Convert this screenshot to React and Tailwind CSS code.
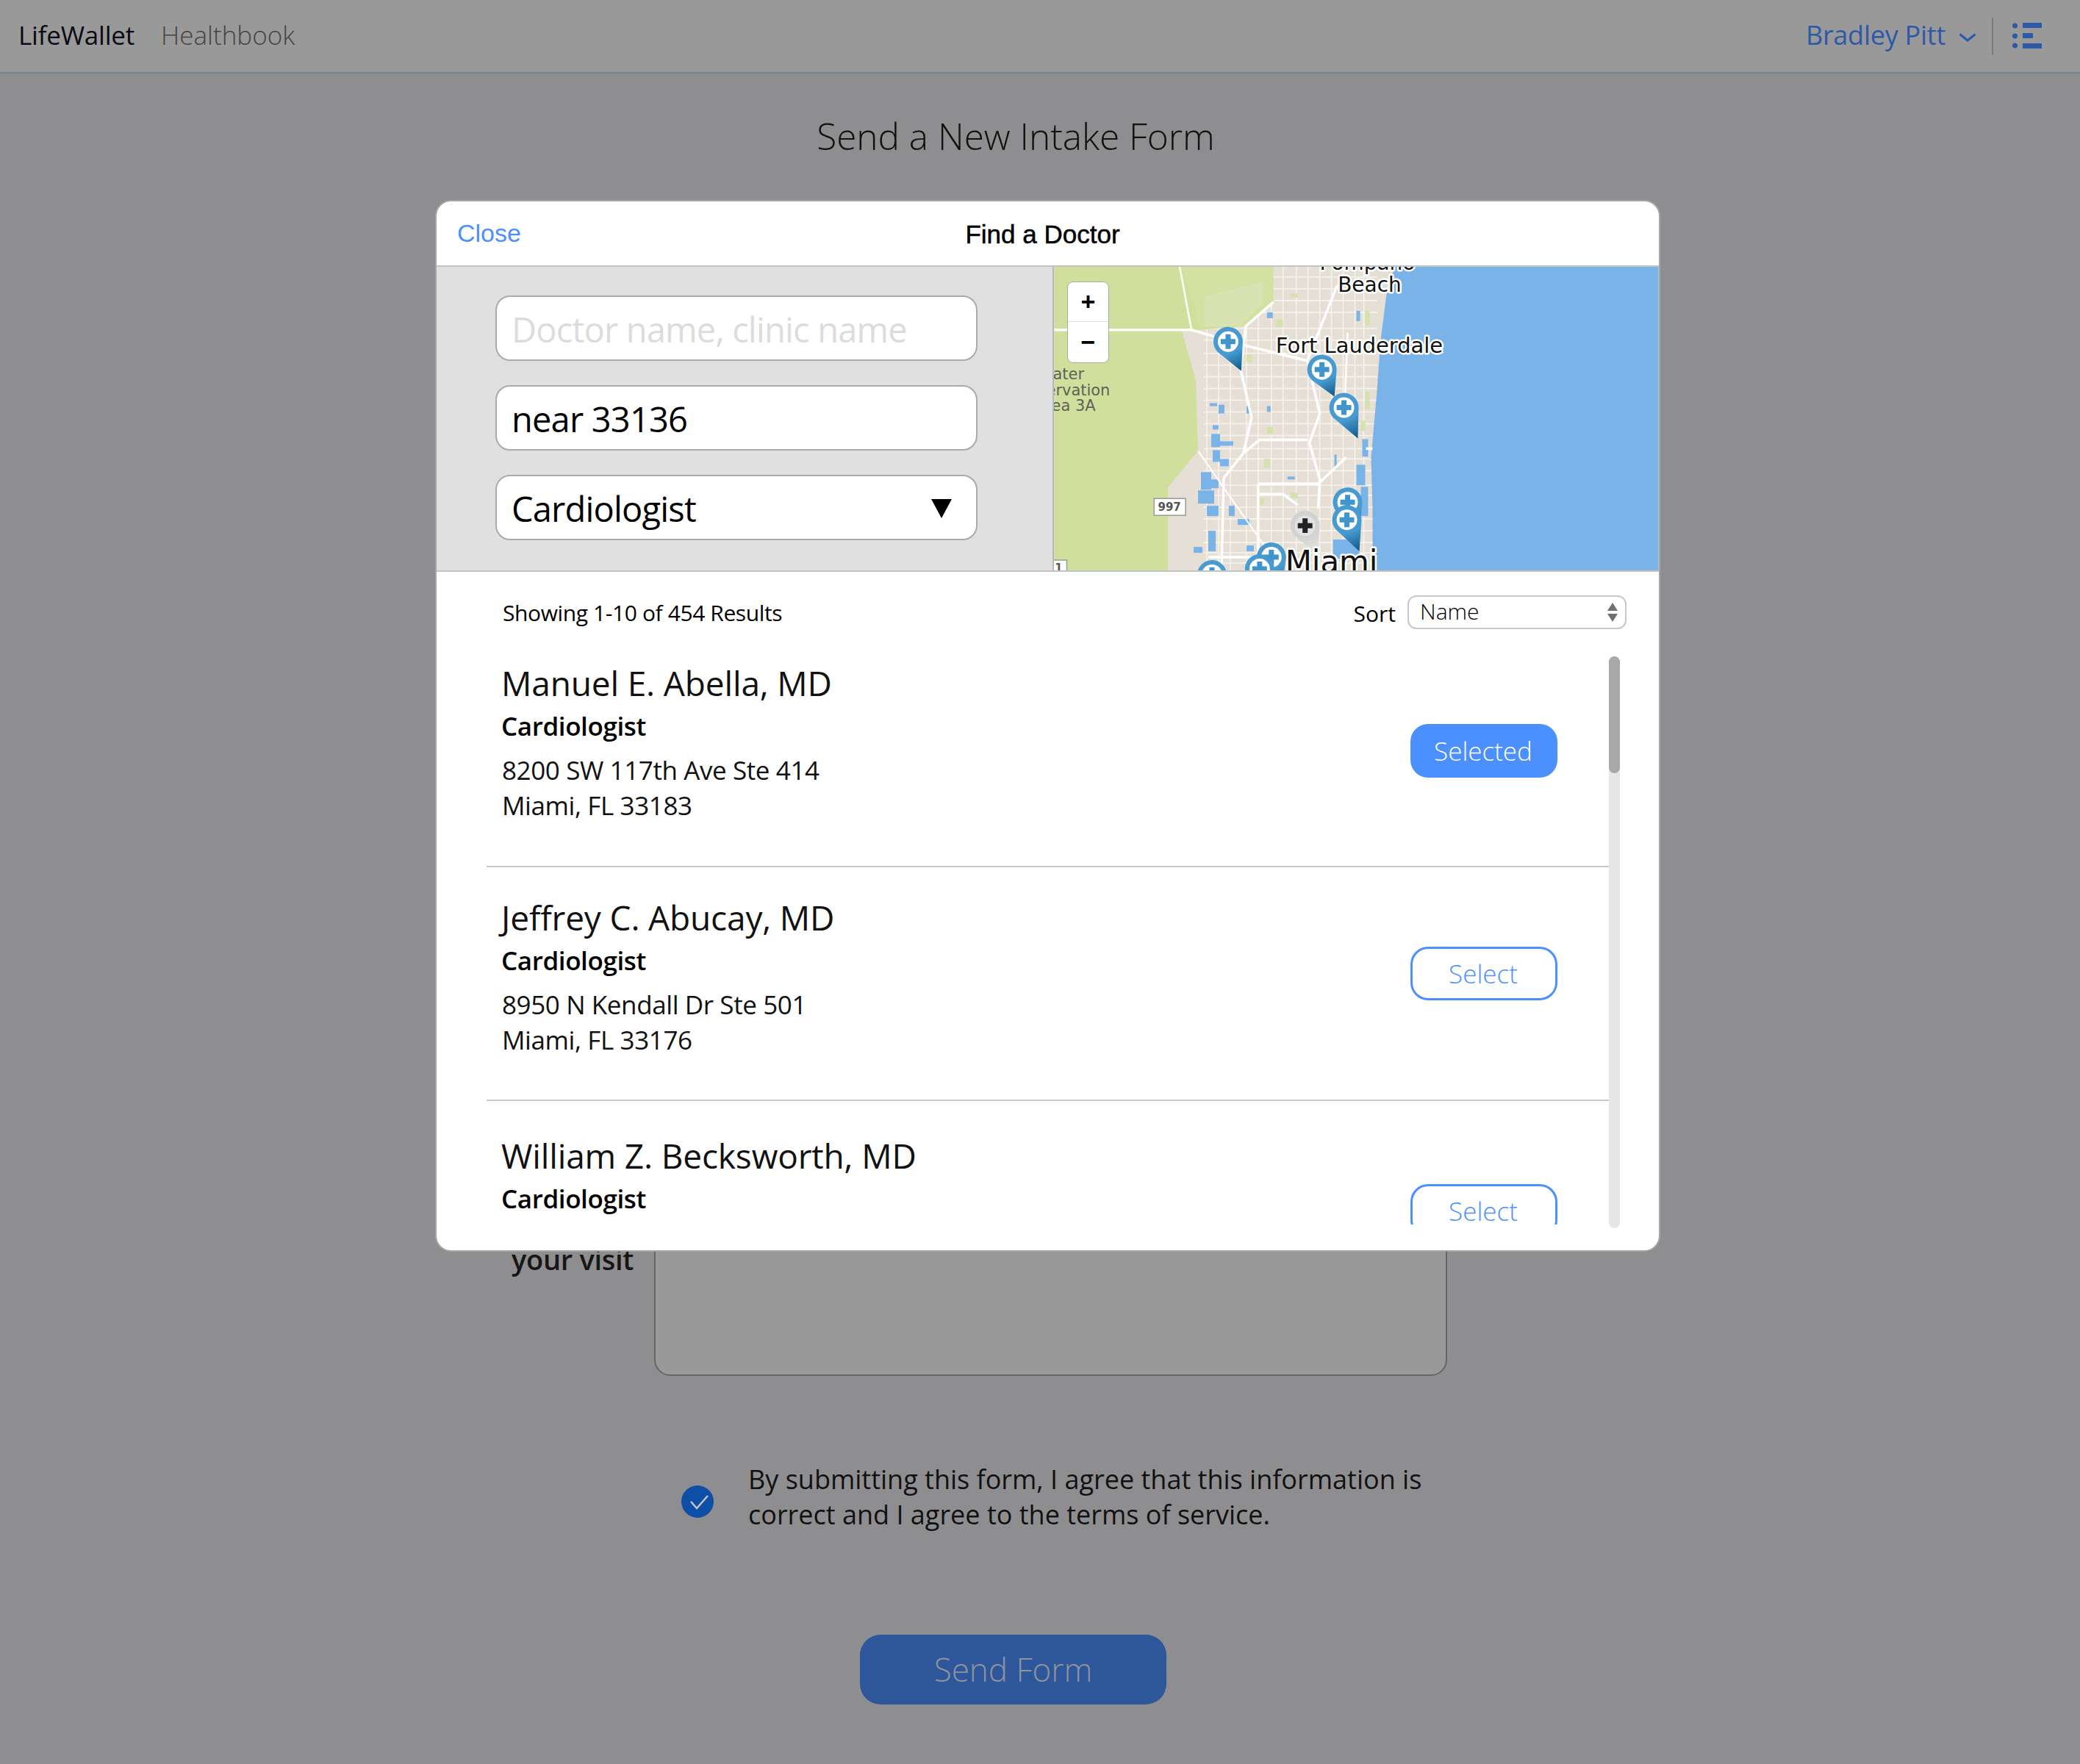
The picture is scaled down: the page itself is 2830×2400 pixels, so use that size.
const doctors = [
  { name: "Manuel E. Abella, MD", line1: "8200 SW 117th Ave Ste 414", line2: "Miami, FL 33183", selected: true, pad: "pt-[4px]", btn: "mt-[92px]", h: "h-[285px]" },
  { name: "Jeffrey C. Abucay, MD", line1: "8950 N Kendall Dr Ste 501", line2: "Miami, FL 33176", pad: "pt-[36px]", btn: "mt-[108px]", h: "h-[316px]" },
  { name: "William Z. Becksworth, MD", line1: "", line2: "", pad: "pt-[42px]", btn: "mt-[113px]", h: "h-[320px]" },
];

const DoctorRow = ({ doctor, last }) => (
  <div className={`${doctor.h} w-[1527px] ml-[68px] flex justify-between shrink-0 ${last ? "" : "border-b-2 border-[#c8c8c8] box-content"}`}>
    <div className={`${doctor.pad} pl-[21px]`}>
      <div className="text-[46px] leading-[64px] text-[#111] -ml-[1px] tracking-[-0.15px]">{doctor.name}</div>
      <div className="text-[35px] leading-[48px] font-semibold text-black mt-[3px] tracking-[-0.4px] -ml-[1px]">Cardiologist</div>
      {doctor.line1 && (
        <div className="text-[35px] leading-[48px] text-[#111] mt-[12px] tracking-[-0.4px]">
          <div>{doctor.line1}</div>
          <div>{doctor.line2}</div>
        </div>
      )}
    </div>
    <div className={doctor.btn}>
      <div
        className={`w-[200px] h-[73px] mr-[70px] rounded-[24px] flex items-center justify-center pt-[2px] pr-[2px] text-[35px] font-light border-[3px] border-[#4c90fe] ${
          doctor.selected ? "bg-[#4c90fe] text-white" : "bg-white text-[#4c90fe]"
        }`}
      >
        {doctor.selected ? "Selected" : "Select"}
      </div>
    </div>
  </div>
);

const Pin = ({ x, y, tx, ty, gray }) => {
  const r = 20;
  const dx = tx - x;
  const dy = ty - y;
  const len = Math.hypot(dx, dy);
  const base = Math.atan2(dy, dx);
  const spread = Math.acos(r / len);
  const ax = x + r * Math.cos(base + spread);
  const ay = y + r * Math.sin(base + spread);
  const bx = x + r * Math.cos(base - spread);
  const by = y + r * Math.sin(base - spread);
  const id = `pin-${x}-${y}`;
  return (
    <g>
      <defs>
        <linearGradient id={id} gradientUnits="userSpaceOnUse" x1={x} y1={y} x2={tx} y2={ty}>
          <stop offset="0.35" stopColor={gray ? "#d2d2d2" : "#479bd0"} />
          <stop offset="1" stopColor={gray ? "#e4e4e4" : "#0e5685"} />
        </linearGradient>
      </defs>
      <path d={`M${ax} ${ay} L${tx} ${ty} L${bx} ${by} A${r} ${r} 0 1 0 ${ax} ${ay} Z`} fill={`url(#${id})`} />
      <circle cx={x} cy={y} r="14" fill={gray ? "#e2e2e2" : "#ffffff"} />
      <path d={`M${x - 3.5} ${y - 10}h7v6.5h6.5v7h-6.5v6.5h-7v-6.5h-6.5v-7h6.5z`} fill={gray ? "#222222" : "#3f95cc"} />
    </g>
  );
};

const MapView = () => {
  const hLines = [14, 30, 46, 62, 84, 100, 118, 134, 150, 166, 182, 198, 214, 230, 248, 262, 278, 298, 312, 328, 344, 360, 376, 390, 404];
  const vLines = [208, 224, 240, 262, 278, 296, 312, 330, 346, 362, 378, 394, 410, 422];
  const blue = [
    [212, 186, 10, 4], [224, 188, 8, 12], [216, 216, 8, 6], [214, 228, 12, 18], [226, 238, 18, 6],
    [216, 250, 10, 16], [226, 262, 12, 10], [200, 280, 14, 24], [214, 290, 10, 12], [196, 305, 22, 18],
    [208, 326, 16, 14], [238, 326, 8, 14], [250, 344, 16, 8], [210, 360, 10, 28], [190, 382, 12, 8],
    [290, 62, 8, 8], [412, 270, 12, 28], [420, 235, 8, 24], [382, 256, 3, 20], [380, 372, 36, 26],
    [412, 60, 5, 14], [262, 380, 10, 8], [262, 190, 6, 10], [290, 190, 5, 8], [418, 300, 10, 40], [318, 286, 10, 4],
  ];
  const green = [
    [302, 72, 10, 10], [262, 120, 8, 10], [290, 218, 8, 10], [322, 36, 10, 6], [286, 262, 8, 12],
    [424, 60, 6, 20], [424, 170, 6, 24], [418, 210, 6, 14], [300, 380, 8, 10], [322, 308, 10, 8], [280, 316, 6, 8],
  ];
  return (
    <svg viewBox="0 0 824 414" className="w-full h-full block">
      <defs>
        <clipPath id="land">
          <path d="M299 0L299 48L261 81L174 88L193 155L196 251L155 301L155 414L434 414L434 330L432 260L440 170L445 100L453 38L464 0Z" />
        </clipPath>
      </defs>
      <rect width="824" height="414" fill="#d0e09c" />
      <path d="M175 0L299 0L299 48L262 82L198 82L190 50Z" fill="#d3e1a2" />
      <path d="M205 40L285 20L285 50L255 80L205 82Z" fill="#d9e2b2" />
      <rect x="430" width="394" height="414" fill="#7ab3e8" />
      <path d="M299 0L299 48L261 81L174 88L193 155L196 251L155 301L155 414L434 414L434 330L432 260L440 170L445 100L453 38L464 0Z" fill="#e6dfd5" />
      <g clipPath="url(#land)" stroke="#f6f3ee" fill="none">
        {hLines.map((y) => (
          <path key={y} d={`M204 ${y}H440`} strokeWidth="1.6" />
        ))}
        {vLines.map((x) => (
          <path key={x} d={`M${x} 0V414`} strokeWidth="1.6" />
        ))}
      </g>
      {green.map(([x, y, w, h]) => (
        <rect key={`g-${x}-${y}`} x={x} y={y} width={w} height={h} fill="#d6e2ae" />
      ))}
      {blue.map(([x, y, w, h]) => (
        <rect key={`${x}-${y}`} x={x} y={y} width={w} height={h} fill="#7ab3e8" />
      ))}
      <g stroke="#ffffff" strokeWidth="3.5" fill="none" strokeLinejoin="round">
        <path d="M0 86H187L263 108L345 128" />
        <path d="M171 0L187 86" strokeWidth="2.5" />
        <path d="M299 48L261 81L254 140L269 205L258 254L231 288L228 414" />
        <path d="M386 25L345 128L362 200L348 240L362 290L360 330" />
        <path d="M258 254L280 236H345" />
        <path d="M196 251L300 400" strokeWidth="2" />
        <path d="M278 296H360L398 260" />
        <path d="M278 296V414" />
        <path d="M280 310H312L332 325" />
        <path d="M210 396H300" />
        <path d="M400 90L396 190" strokeWidth="2.5" />
        <path d="M425 248H434" />
      </g>
      <rect x="136" y="316" width="43" height="23" fill="#ffffff" stroke="#9a9a9a" strokeWidth="1.5" />
      <text x="157" y="333" textAnchor="middle" fontFamily="'DejaVu Sans', sans-serif" fontWeight="700" fontSize="15" fill="#555">997</text>
      <rect x="-4" y="400" width="21" height="20" fill="#ffffff" stroke="#9a9a9a" strokeWidth="1.5" />
      <text x="6" y="416" textAnchor="middle" fontFamily="'DejaVu Sans', sans-serif" fontSize="15" fontWeight="700" fill="#555">1</text>
      <g fontFamily="'DejaVu Sans', sans-serif" fontSize="21" fill="#5d6356">
        <text x="-2" y="153">ater</text>
        <text x="-11" y="175">ervation</text>
        <text x="-4" y="196">ea 3A</text>
      </g>
      <g fontFamily="'DejaVu Sans', sans-serif" fill="#111" stroke="#ffffff" strokeWidth="5" paintOrder="stroke" strokeLinejoin="round">
        <text x="427" y="4" textAnchor="middle" fontSize="28">Pompano</text>
        <text x="430" y="34" textAnchor="middle" fontSize="28">Beach</text>
        <text x="416" y="117" textAnchor="middle" fontSize="29">Fort Lauderdale</text>
      </g>
      <Pin x={400} y={321} tx={416} ty={362} />
      <Pin x={237} y={102} tx={255} ty={142} />
      <Pin x={365} y={140} tx={382} ty={177} />
      <Pin x={395} y={192} tx={414} ty={234} />
      <Pin x={215} y={420} tx={220} ty={462} />
      <Pin x={296} y={396} tx={310} ty={440} />
      <Pin x={280} y={412} tx={290} ty={455} />
      <Pin x={342} y={353} tx={358} ty={390} gray />
      <Pin x={399} y={345} tx={416} ty={388} />
      <text x="378" y="417" textAnchor="middle" fontFamily="'DejaVu Sans', sans-serif" fontSize="42" fill="#111" stroke="#ffffff" strokeWidth="5" paintOrder="stroke" strokeLinejoin="round">Miami</text>
    </svg>
  );
};

const FieldBox = ({ children, className = "" }) => (
  <div className={`w-[656px] h-[89px] shrink-0 rounded-[20px] border-2 border-[#aaaaaa] bg-white flex items-center pl-[20px] pr-[33px] pt-[3px] text-[47px] tracking-[-0.8px] ${className}`}>
    {children}
  </div>
);

const DoctorModal = () => (
  <div className="absolute left-[592px] top-[272px] w-[1667px] h-[1431px] rounded-[22px] bg-white border-2 border-[#a6a6a6] overflow-hidden flex flex-col font-['Open_Sans',sans-serif]">
    <div className="h-[89px] shrink-0 border-b-2 border-[#c4c4c4] relative flex items-center justify-center font-['Liberation_Sans',sans-serif]">
      <span className="absolute left-[28px] top-[21px] text-[34px] leading-[44px] text-[#4c90fe]">Close</span>
      <span className="text-[35px] leading-[44px] text-black ml-[-14px] mt-[2px] [-webkit-text-stroke:0.5px_black]">Find a Doctor</span>
    </div>
    <div className="h-[415px] shrink-0 flex border-b-2 border-[#c4c4c4] bg-[#e0e0e0]">
      <div className="w-[838px] shrink-0 flex flex-col pl-[80px] pt-[39px] gap-[33px] text-black">
        <FieldBox>
          <span className="text-[#dcdcdc]">Doctor name, clinic name</span>
        </FieldBox>
        <FieldBox>near 33136</FieldBox>
        <FieldBox className="justify-between">
          Cardiologist
          <svg width="28" height="26" viewBox="0 0 28 26">
            <path d="M0 0H28L14 26Z" fill="#000" />
          </svg>
        </FieldBox>
      </div>
      <div className="flex-1 relative border-l-2 border-[#b8b8b8] overflow-hidden">
        <MapView />
        <div className="absolute left-[18px] top-[20px] w-[57px] h-[111px] bg-white rounded-[8px] border border-[#aaaaaa] flex flex-col items-center text-black font-['Liberation_Sans',sans-serif]">
          <div className="h-[54px] w-full flex items-center justify-center border-b border-[#dddddd] text-[34px] font-bold">+</div>
          <div className="flex-1 w-full flex items-center justify-center text-[34px] font-bold">−</div>
        </div>
      </div>
    </div>
    <div className="flex-1 flex flex-col min-h-0 relative">
      <div className="h-[115px] shrink-0 flex items-center justify-between pl-[90px] pr-[44px] pb-[5px] text-black">
        <span className="text-[30px] leading-[40px] font-medium tracking-[-0.4px] mt-[1px]">Showing 1-10 of 454 Results</span>
        <div className="flex items-center gap-[16px]">
          <span className="text-[30px] leading-[40px] mt-[4px]">Sort</span>
          <div className="w-[298px] h-[46px] rounded-[12px] border-2 border-[#c8c8c8] flex items-center justify-between pl-[15px] pr-[10px] text-[30px]">
            <span className="leading-[40px] mt-[-3px] font-light">Name</span>
            <svg width="14" height="26" viewBox="0 0 14 26">
              <path d="M7 0L14 11H0Z M0 15H14L7 26Z" fill="#707070" />
            </svg>
          </div>
        </div>
      </div>
      <div className="h-[773px] shrink-0 overflow-hidden flex flex-col">
        {doctors.map((d, i) => (
          <DoctorRow key={d.name} doctor={d} last={i === doctors.length - 1} />
        ))}
      </div>
      <div className="absolute left-[1595px] top-[115px] w-[15px] h-[778px] rounded-[8px] bg-[#e6e6e6]">
        <div className="h-[159px] rounded-[8px] bg-[#a8a8a8]" />
      </div>
    </div>
  </div>
);

const App = () => (
  <div className="relative w-[2830px] h-[2400px] bg-[#8e8e90] overflow-hidden flex flex-col font-['Open_Sans',sans-serif]">
    <header className="h-[100px] shrink-0 bg-[#999999] border-b-2 border-[#6f8598] flex items-center justify-between pl-[25px] pr-[52px]">
      <div className="flex items-center gap-[36px] text-[35px] mt-[-2px]">
        <span className="text-[#0a0a14] tracking-[-0.2px]">LifeWallet</span>
        <span className="text-[#444444] font-light">Healthbook</span>
      </div>
      <div className="flex items-center text-[#2c5aa8]">
        <span className="text-[36px] tracking-[-0.25px] mt-[-3px]">Bradley Pitt</span>
        <svg className="ml-[18px] mt-[4px]" width="24" height="12" viewBox="0 0 24 12" fill="none">
          <path d="M1.5 1.5L12 10L22.5 1.5" stroke="#2c5aa8" strokeWidth="3" />
        </svg>
        <div className="w-[2px] h-[51px] bg-[#7a7a7a] ml-[21px] mr-[26px]" />
        <svg width="40" height="36" viewBox="0 0 40 36" fill="#2c5aa8">
          <circle cx="3.5" cy="4" r="3.5" />
          <circle cx="3.5" cy="18" r="3.5" />
          <circle cx="3.5" cy="31" r="3.5" />
          <rect x="14" y="0" width="26" height="7" />
          <rect x="14" y="14" width="14" height="7" />
          <rect x="14" y="28" width="26" height="7" />
        </svg>
      </div>
    </header>
    <main className="flex-1 flex flex-col">
      <h1 className="text-[49.5px] font-light text-[#111] text-center mt-[51px] leading-[68px] mr-[66px]">Send a New Intake Form</h1>
      <div className="flex ml-[696px] mt-[1466px] h-[172px]">
        <span className="w-[194px] text-[38px] leading-[48px] mt-[-72px] pt-[76px] font-semibold text-[#161616] tracking-[-0.3px]">your visit</span>
        <div className="w-[1079px] -mt-[100px] h-[287px] rounded-[22px] border-2 border-[#666666] bg-[#999999]" />
      </div>
      <div className="flex items-center ml-[927px] mt-[132px]">
        <div className="w-[44px] h-[44px] mt-[12px] rounded-full bg-[#0d4ea6] shrink-0">
          <svg width="44" height="44" viewBox="0 0 44 44" fill="none">
            <path d="M13 22L21 31L36 14" stroke="#c4c4c4" strokeWidth="2.5" />
          </svg>
        </div>
        <p className="ml-[47px] text-[36px] leading-[48px] text-[#111]">
          By submitting this form, I agree that this information is
          <br />
          correct and I agree to the terms of service.
        </p>
      </div>
      <div className="ml-[1170px] mt-[139px] w-[417px] h-[95px] rounded-[28px] bg-[#2d569b] flex items-center justify-center pb-[2px] text-[44px] font-light text-[#8f939e]">
        Send Form
      </div>
    </main>
    <DoctorModal />
  </div>
);

export default App;
